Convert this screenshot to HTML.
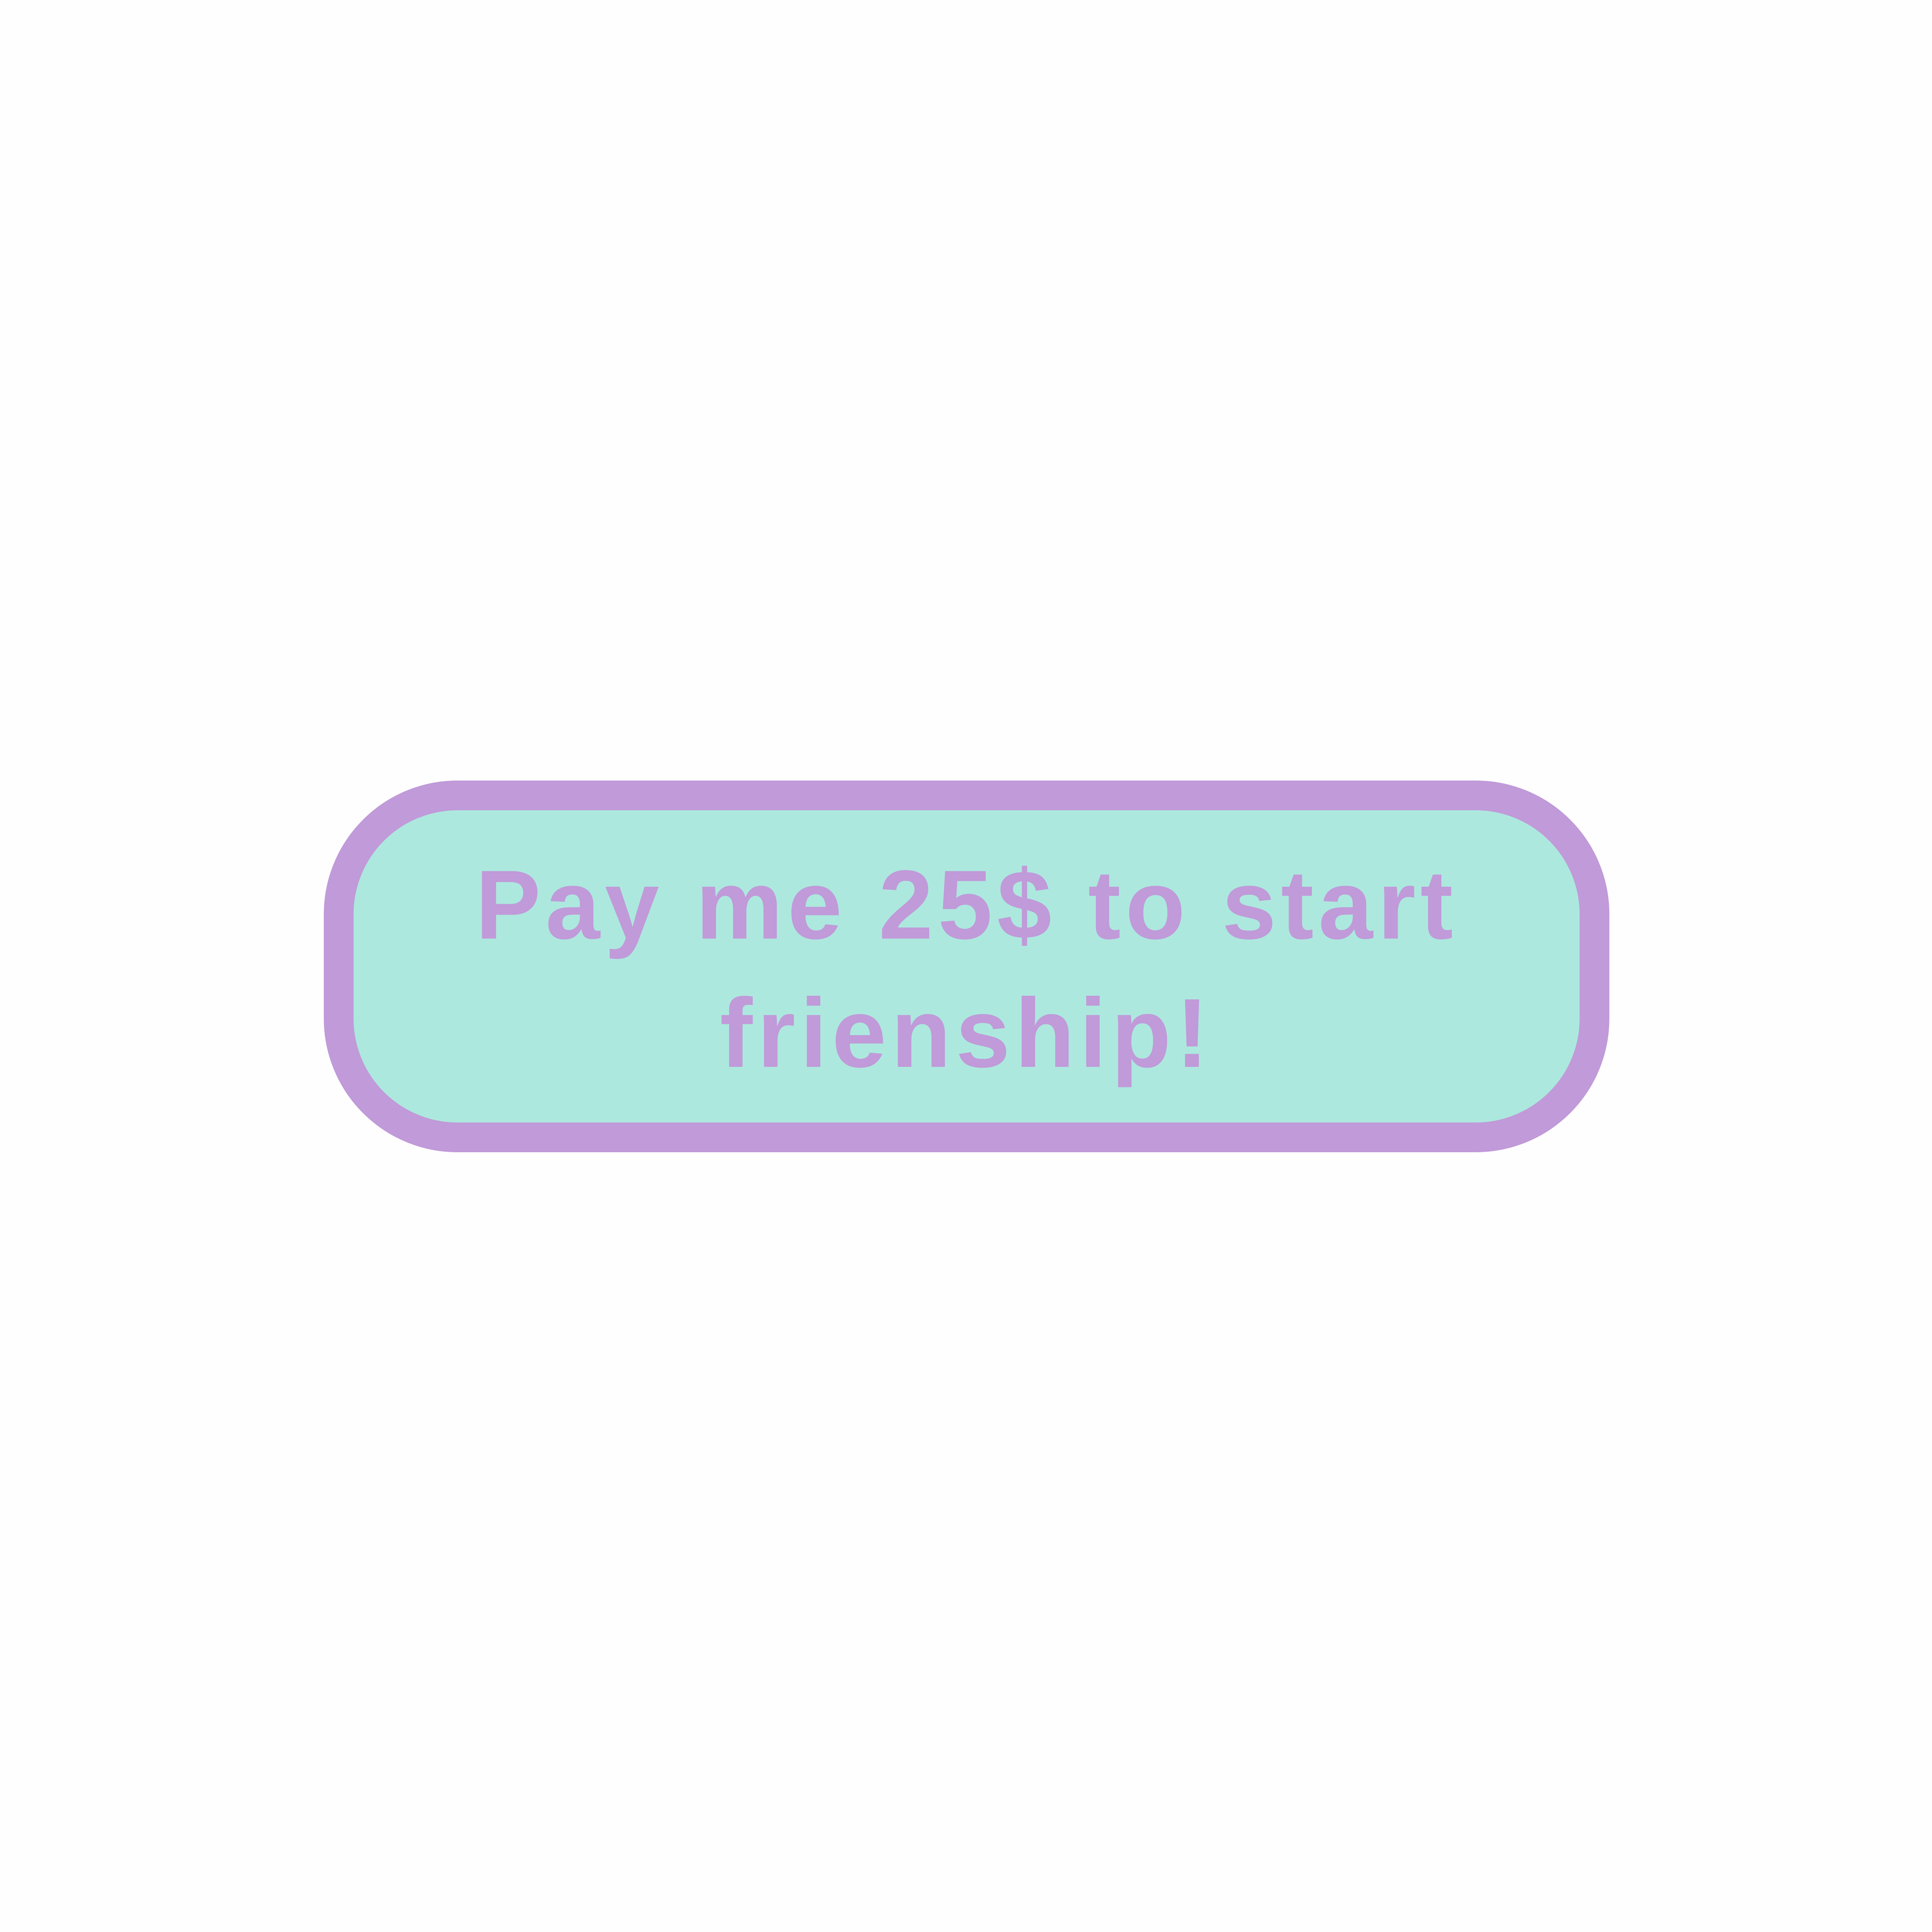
<!DOCTYPE html>
<html><head><meta charset="utf-8"><style>
html{margin:0;padding:0;width:100vw;height:100vw;overflow:hidden;background:#fefefe;}
body{margin:0;padding:0;width:100vw;height:100vw;position:relative;overflow:hidden;background:#fefefe;}
.box{position:absolute;left:16.76vw;top:40.39vw;width:66.53vw;height:19.24vw;box-sizing:border-box;border:1.55vw solid #c09ad9;background:#ade8de;border-radius:6.92vw;}
.t{position:absolute;left:16.76vw;width:66.53vw;text-align:center;font-family:"Liberation Sans",Arial,sans-serif;font-weight:bold;font-size:5.077vw;letter-spacing:0.24vw;color:#c09ad9;line-height:5.077vw;height:5.077vw;white-space:nowrap;}
</style></head><body>
<div class="box"></div>
<div class="t" style="top:44.29vw;">Pay me 25$ to start</div>
<div class="t" style="top:50.94vw;">frienship!</div>
</body></html>
